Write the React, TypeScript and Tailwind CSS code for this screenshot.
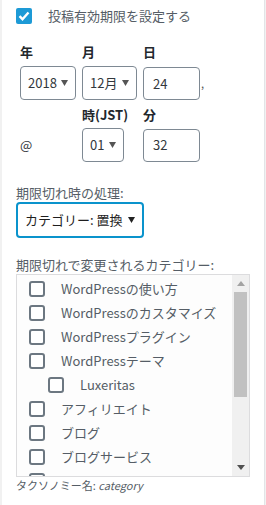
import React from 'react';

const Arrow = ({ color = '#555' }: { color?: string }) => (
  <svg width="7" height="6" viewBox="0 0 7 6" className="shrink-0">
    <polygon points="0,0 7,0 3.5,6" fill={color} />
  </svg>
);

const FakeSelect = ({ value, width }: { value: string; width: string }) => (
  <div className={`${width} h-[34px] border border-[#7e8993] rounded-[4px] bg-white flex items-center justify-between pl-[7px] pr-[7px] text-[13px] text-[#32373c]`}>
    <span>{value}</span>
    <Arrow />
  </div>
);

const FakeInput = ({ value }: { value: string }) => (
  <div className="w-[57px] h-[33px] border border-[#7e8993] rounded-[4px] bg-white flex items-center pl-[9px] text-[13px] text-[#32373c]">
    {value}
  </div>
);

const categories: { name: string; child?: boolean }[] = [
  { name: 'WordPressの使い方' },
  { name: 'WordPressのカスタマイズ' },
  { name: 'WordPressプラグイン' },
  { name: 'WordPressテーマ' },
  { name: 'Luxeritas', child: true },
  { name: 'アフィリエイト' },
  { name: 'ブログ' },
  { name: 'ブログサービス' },
];

export default function App() {
  return (
    <div
      className="w-[266px] h-[505px] bg-[#f1f1f1] overflow-hidden"
      style={{ fontFamily: '"Noto Sans CJK JP", "Noto Sans", sans-serif' }}
    >
      <div className="ml-[2px] w-[263px] h-full bg-white border-r border-[#e2e4e7] pl-[14px]">
        {/* enable checkbox */}
        <div className="pt-[8px] flex items-center h-[24px]">
          <div className="w-[16px] h-[16px] rounded-[2px] bg-[#1d9ad6] flex items-center justify-center">
            <svg width="12" height="10" viewBox="0 0 12 10">
              <path d="M1.5 5.2 L4.5 8.2 L10.5 1.5" stroke="#fff" strokeWidth="2.4" fill="none" />
            </svg>
          </div>
          <span className="ml-[16px] text-[13px] leading-[16px] text-[#555d66]">投稿有効期限を設定する</span>
        </div>

        {/* date */}
        <div className="pl-[4px]">
          <div className="mt-[20px] flex h-[16px] text-[13px] leading-[16px] font-bold text-[#23282d]">
            <div className="w-[62px]">年</div>
            <div className="w-[61px]">月</div>
            <div>日</div>
          </div>
          <div className="mt-[6px] flex items-start h-[34px]">
            <div className="w-[62px]">
              <FakeSelect value="2018" width="w-[56px]" />
            </div>
            <div className="w-[61px]">
              <FakeSelect value="12月" width="w-[55px]" />
            </div>
            <div className="pt-[1px]">
              <FakeInput value="24" />
            </div>
            <span className="mt-[10px] text-[11px] leading-[14px] text-[#555] ml-[1px]">,</span>
          </div>

          <div className="mt-[7px] flex h-[16px] text-[13px] leading-[16px] font-bold text-[#23282d]">
            <div className="w-[62px]" />
            <div className="w-[61px]">時(JST)</div>
            <div>分</div>
          </div>
          <div className="mt-[5px] flex items-center h-[34px]">
            <div className="w-[62px] text-[13px] text-[#32373c]">@</div>
            <div className="w-[61px]">
              <FakeSelect value="01" width="w-[42px]" />
            </div>
            <FakeInput value="32" />
          </div>
        </div>

        {/* expire type */}
        <div className="mt-[23px] text-[13px] leading-[16px] text-[#555d66]">期限切れ時の処理:</div>
        <div className="mt-[1px] w-[128px] h-[36px] border-2 border-[#0a93cc] rounded-[4px] flex items-center justify-between pl-[7px] pr-[7px] text-[13px] text-[#1e1e1e]">
          <span>カテゴリー: 置換</span>
          <Arrow color="#222" />
        </div>

        {/* categories */}
        <div className="mt-[19px] text-[13px] leading-[16px] text-[#555d66]">期限切れで変更されるカテゴリー:</div>
        <div className="mt-[1px] w-[234px] h-[203px] border border-[#dcdcde] bg-[#fdfdfd] flex overflow-hidden">
          <div className="flex-1 pt-[2px] pl-[12px] overflow-hidden">
            {categories.map((c) => (
              <div key={c.name} className={`h-[24px] flex items-center shrink-0 ${c.child ? 'pl-[19px]' : ''}`}>
                <div className="w-[16px] h-[16px] border-2 border-[#6c7781] rounded-[3px] bg-white shrink-0" />
                <span className="ml-[16px] text-[13px] leading-[16px] text-[#555d66] whitespace-nowrap">{c.name}</span>
              </div>
            ))}
            <div className="h-[10px] pt-[4px] overflow-hidden">
              <div className="w-[16px] h-[16px] border-2 border-[#6c7781] rounded-[3px] bg-white" />
            </div>
          </div>
          <div className="w-[17px] h-full bg-[#f0f0f0] flex flex-col shrink-0">
            <div className="h-[17px] flex items-center justify-center">
              <svg width="8" height="5" viewBox="0 0 8 5">
                <polygon points="0,5 8,5 4,0" fill="#a3a3a3" />
              </svg>
            </div>
            <div className="h-[105px] mx-[2px] bg-[#c1c1c1]" />
            <div className="flex-1" />
            <div className="h-[17px] flex items-center justify-center">
              <svg width="8" height="5" viewBox="0 0 8 5">
                <polygon points="0,0 8,0 4,5" fill="#505050" />
              </svg>
            </div>
          </div>
        </div>
        <div className="mt-[1px] text-[11px] leading-[14px] text-[#555d66]">
          タクソノミー名: <i>category</i>
        </div>
      </div>
    </div>
  );
}
